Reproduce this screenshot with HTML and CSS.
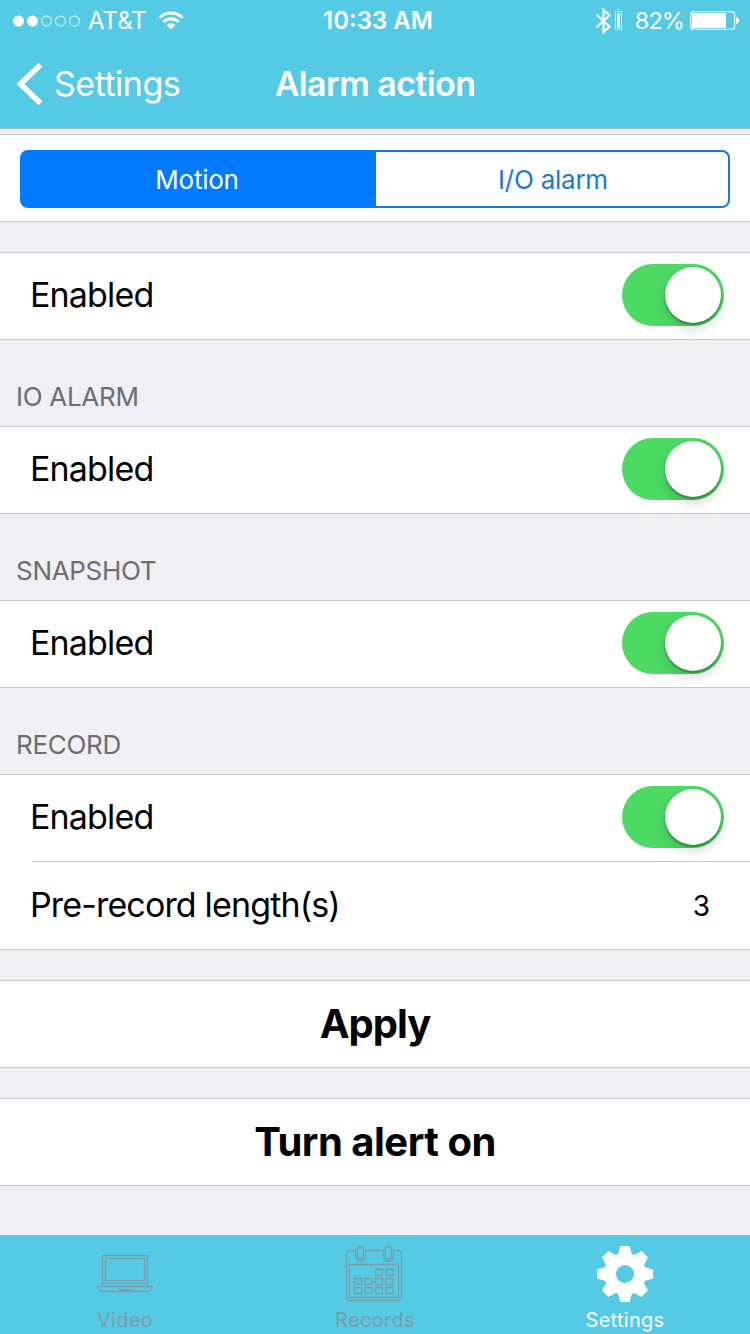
FILE: index.html
```html
<!DOCTYPE html>
<html lang="en">
<head>
    <meta charset="UTF-8">
    <meta name="viewport" content="width=device-width, initial-scale=1.0">
    <title>Alarm action</title>
    <link rel="stylesheet" href="styles.css">
</head>
<body>
    <div class="header">
        <div class="status-bar">
            <div class="status-left">
                <svg width="68" height="12" viewBox="0 0 68 12">
                    <g fill="#fff">
                        <circle cx="5.5" cy="6" r="5.5"/>
                        <circle cx="19.5" cy="6" r="5.5"/>
                    </g>
                    <g fill="none" stroke="#fff">
                        <circle cx="33.5" cy="6" r="5"/>
                        <circle cx="47.5" cy="6" r="5"/>
                        <circle cx="61.5" cy="6" r="5"/>
                    </g>
                </svg>
                <span class="carrier">AT&amp;T</span>
                <svg class="wifi" width="26" height="19" viewBox="0 0 26 19">
                    <g fill="none" stroke="#fff" stroke-width="2.9">
                        <path d="M1.5 6.8a16.3 16.3 0 0 1 23 0"/>
                        <path d="M5.4 10.9a10.8 10.8 0 0 1 15.2 0"/>
                    </g>
                    <path fill="#fff" d="M8.6 14.2a6.2 6.2 0 0 1 8.8 0L13 18.5z"/>
                </svg>
            </div>
            <div class="clock">10:33 AM</div>
            <div class="status-right">
                <svg width="28" height="28" viewBox="0 0 28 28">
                    <path fill="none" stroke="#fff" stroke-width="2.2" d="M1.500 7.500l13 12.300-6 5.200V3l6 5.200L1.500 20.500"/>
                    <rect x="20.500" y="4.500" width="6" height="18" fill="none" stroke="#fff"/>
                    <path fill="#fff" d="M22 6h3v15h-3zM22 2h3v1h-3z"/>
                </svg>
                <span class="percent">82%</span>
                <svg class="battery" width="49" height="19" viewBox="0 0 49 19">
                    <rect x=".6" y=".6" width="44" height="17.8" rx="3" fill="none" stroke="#fff" stroke-width="1.2"/>
                    <rect x="2" y="2" width="34" height="15" rx="1" fill="#fff"/>
                    <path fill="#fff" d="M46 6c4 .5 4 6.500 0 7z"/>
                </svg>
            </div>
        </div>
        <div class="nav-bar">
            <a class="back">
                <svg width="26" height="42" viewBox="0 0 26 42">
                    <path fill="none" stroke="#fff" stroke-width="5.500" d="M24.500 1.800L4.500 21l20 19.200"/>
                </svg>
                <span>Settings</span>
            </a>
            <h1>Alarm action</h1>
        </div>
    </div>

    <div class="content">
        <div class="group segment-group">
            <div class="segmented">
                <div class="segment active">Motion</div>
                <div class="segment">I/O alarm</div>
            </div>
        </div>

        <div class="spacer"></div>
        <div class="group">
            <div class="row"><span class="label">Enabled</span><div class="switch"><div class="knob"></div></div></div>
        </div>

        <h2>IO ALARM</h2>
        <div class="group">
            <div class="row"><span class="label">Enabled</span><div class="switch"><div class="knob"></div></div></div>
        </div>

        <h2>SNAPSHOT</h2>
        <div class="group">
            <div class="row"><span class="label">Enabled</span><div class="switch"><div class="knob"></div></div></div>
        </div>

        <h2>RECORD</h2>
        <div class="group">
            <div class="row"><span class="label">Enabled</span><div class="switch"><div class="knob"></div></div></div>
            <div class="divider"></div>
            <div class="row row-last"><span class="label">Pre-record length(s)</span><span class="value">3</span></div>
        </div>

        <div class="spacer"></div>
        <div class="group">
            <div class="row button apply">Apply</div>
        </div>

        <div class="spacer"></div>
        <div class="group">
            <div class="row button">Turn alert on</div>
        </div>
    </div>

    <div class="tab-bar">
        <div class="tab">
            <svg width="58" height="58" viewBox="0 0 58 58">
                <g fill="none" stroke="#7b9ba5" stroke-width="1.300">
                    <rect x="6.500" y="10.500" width="45" height="28"/>
                    <rect x="9.500" y="13.500" width="39" height="22"/>
                    <path d="M1.500 41.500h55v1.500q-2 3.500-5 3.500h-45q-3 0-5-3.500zM22 43.500q1 1.500 3 1.500h9q2 0 3-1.500"/>
                </g>
            </svg>
            <span>Video</span>
        </div>
        <div class="tab">
            <svg width="58" height="58" viewBox="1 -1 58 58">
                <g fill="none" stroke="#7b9ba5" stroke-width="1.300">
                    <path d="M10.500 4.500h-5q-4 0-4 4v42q0 4 4 4h47q4 0 4-4v-42q0-4-4-4h-4M20.500 4.500h18M4.500 18.500h49v33h-49z"/>
                    <path d="M12.500 11v-7.500q0-3 3-3t3 3v7.500q0 2-3 2t-3-2M10.500 4.500v5.500q0 5.500 5 5.500t5-5.500v-5.500"/>
                    <path d="M40.500 11v-7.500q0-3 3-3t3 3v7.500q0 2-3 2t-3-2M38.500 4.500v5.500q0 5.500 5 5.500t5-5.500v-5.500"/>
                    <path d="M30.500 23.500h7v6h-7zM41 23.500h7v6h-7zM9.500 32.500h7v6h-7zM20 32.500h7v6h-7zM30.500 32.500h7v6h-7zM41 32.500h7v6h-7zM9.500 41.500h7v6h-7zM20 41.500h7v6h-7zM30.500 41.500h7v6h-7zM41 41.500h7v6h-7z"/>
                </g>
            </svg>
            <span>Records</span>
        </div>
        <div class="tab active">
            <svg width="58" height="58" viewBox="-29 -29 58 58">
                <defs><path id="tooth" d="M-10-17Q-6.500-19-6-23L-4.500-28H4.500L6-23Q6.500-19 10-17z"/></defs>
                <g fill="#fff">
                    <use href="#tooth"/>
                    <use href="#tooth" transform="rotate(45)"/>
                    <use href="#tooth" transform="rotate(90)"/>
                    <use href="#tooth" transform="rotate(135)"/>
                    <use href="#tooth" transform="rotate(180)"/>
                    <use href="#tooth" transform="rotate(225)"/>
                    <use href="#tooth" transform="rotate(270)"/>
                    <use href="#tooth" transform="rotate(315)"/>
                </g>
                <circle r="15" fill="none" stroke="#fff" stroke-width="12"/>
            </svg>
            <span>Settings</span>
        </div>
    </div>
</body>
</html>
```
FILE: styles.css
```css
* {
    box-sizing: border-box;
}
body {
    display: flex;
    flex-direction: column;
    margin: 0;
    height: 1334px;
    overflow: hidden;
    background-color: #efeff4;
    color: #000;
    font-family: Inter, "Liberation Sans", sans-serif;
}
svg {
    display: block;
    flex: none;
    overflow: visible;
}
.header {
    height: 129px;
    background-color: #54cae4;
    border-bottom: 1px solid #a5b5c0;
    color: #fff;
}
.status-bar {
    display: grid;
    grid-template-columns: 1fr auto 1fr;
    align-items: center;
    height: 41px;
    padding: 0 11px 0 13px;
    font-size: 24px;
}
.status-left, .status-right {
    display: flex;
    align-items: center;
}
.status-right {
    justify-content: flex-end;
}
.carrier {
    margin-left: 7px;
}
.wifi {
    margin-left: 11px;
}
.clock {
    font-weight: 600;
    padding-left: 4px;
}
.percent {
    margin-left: 12px;
    font-size: 23.5px;
    letter-spacing: -0.9px;
}
.battery {
    margin-left: 6px;
}
.nav-bar {
    display: grid;
    grid-template-columns: 1fr auto 1fr;
    align-items: center;
    height: 85px;
    padding: 0 16px;
}
.back {
    display: flex;
    align-items: center;
    gap: 12px;
    font-size: 34px;
    letter-spacing: -0.5px;
}
.nav-bar h1 {
    margin: 0;
    font-size: 34px;
    font-weight: 600;
    letter-spacing: -0.6px;
}
.content {
    flex: 1;
    padding-top: 5px;
}
.group {
    background-color: #fff;
    border-top: 1px solid #c8c7cc;
    border-bottom: 1px solid #c8c7cc;
}
.segment-group {
    height: 88px;
    padding: 15px 20px 0;
}
.segmented {
    display: flex;
    height: 58px;
    color: #1b78d4;
    font-size: 26px;
    letter-spacing: -0.25px;
}
.segment {
    display: flex;
    flex: 1;
    align-items: center;
    justify-content: center;
    padding-left: 2px;
    border: 2px solid #1b78d4;
    border-left: none;
    border-radius: 0 8px 8px 0;
}
.segment.active {
    flex: none;
    width: 356px;
    padding: 0 2px 0 0;
    border: none;
    border-radius: 8px 0 0 8px;
    background-color: #007aff;
    color: #fff;
}
.spacer {
    height: 30px;
}
.row {
    display: flex;
    align-items: center;
    justify-content: space-between;
    height: 86px;
    padding: 0 26px 2px 30px;
}
.row-last {
    height: 87px;
}
.label {
    font-size: 34px;
    line-height: 40px;
    letter-spacing: -0.85px;
}
.value {
    margin: 2px 14px 0 0;
    font-size: 28px;
}
.divider {
    height: 1px;
    margin-left: 32px;
    background-color: #c8c7cc;
}
.content h2 {
    height: 86px;
    margin: 0;
    padding: 41px 16px 0;
    color: #6d6d72;
    font-size: 26px;
    font-weight: 400;
    line-height: 32px;
    letter-spacing: -0.3px;
}
.switch {
    width: 102px;
    height: 62px;
    padding: 3px;
    border-radius: 31px;
    background-color: #4cd964;
}
.knob {
    width: 56px;
    height: 56px;
    margin-left: 40px;
    border-radius: 50%;
    background-color: #fff;
    box-shadow: 0 6px 12px rgba(0, 0, 0, 0.16), 0 2px 2px rgba(0, 0, 0, 0.3);
}
.row.button {
    justify-content: center;
    padding: 0 0 2px;
    font-size: 40px;
    font-weight: 700;
    letter-spacing: -0.5px;
}
.row.apply {
    letter-spacing: -1px;
}
.tab-bar {
    display: flex;
    justify-content: center;
    height: 99px;
    border-top: 1px solid #8fb9c9;
    background-color: #54cae4;
    color: #7b9ba5;
}
.tab {
    display: flex;
    flex-direction: column;
    align-items: center;
    width: 250px;
    padding-top: 9px;
    font-size: 20px;
    line-height: 24px;
    letter-spacing: 0.3px;
}
.tab span {
    margin-top: 5px;
}
.tab.active {
    color: #fff;
}
```
